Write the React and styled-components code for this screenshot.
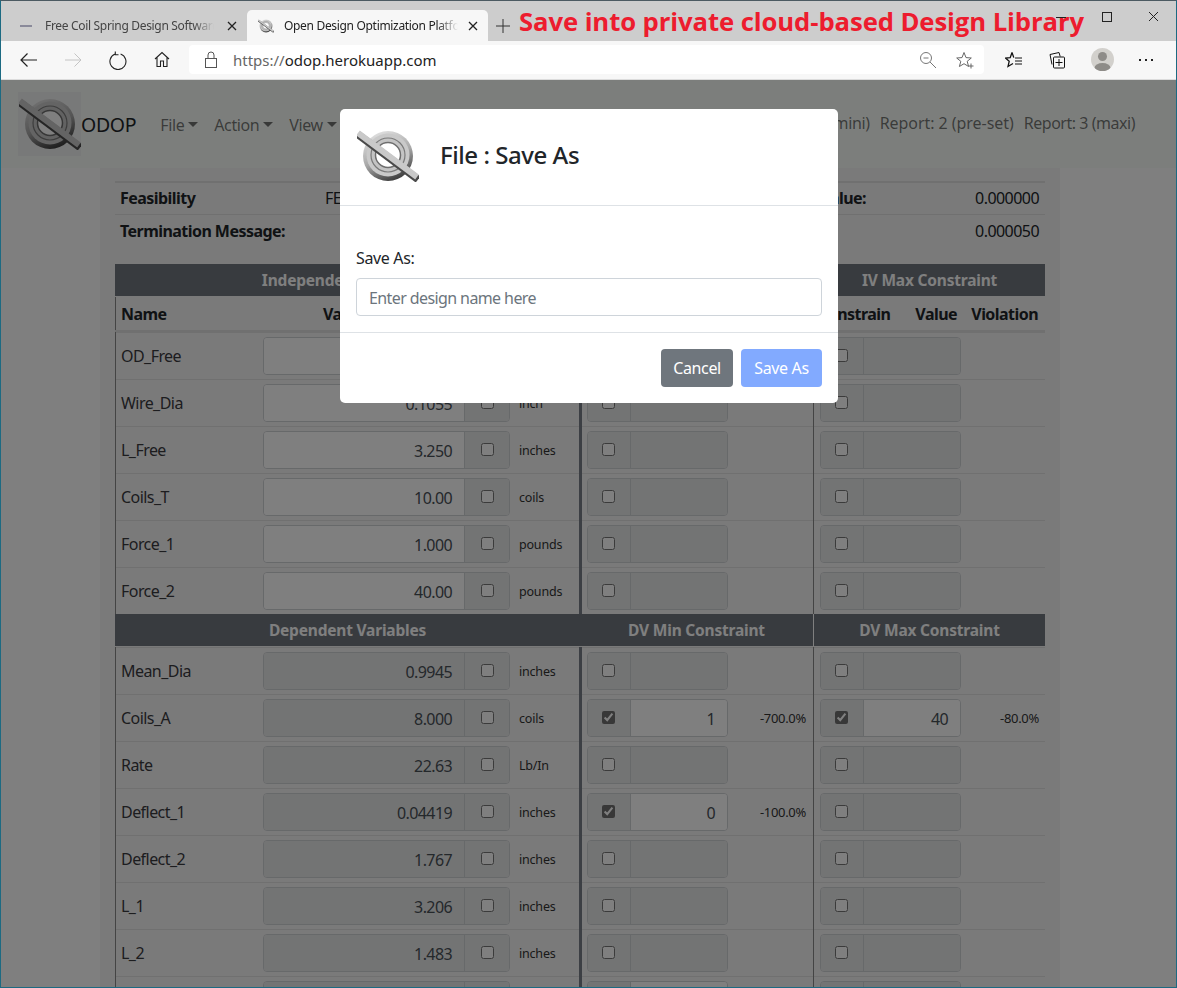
import React from "react";
import styled, { createGlobalStyle } from "styled-components";

const FONT = `"Noto Sans", "Open Sans", sans-serif`;

const Global = createGlobalStyle`
  html, body { margin: 0; padding: 0; height: 988px; overflow: hidden; background: #cdcdcd; }
  * { box-sizing: border-box; }
  body { font-family: ${FONT}; font-size: 16px; color: #212529; letter-spacing: -0.35px; }
`;

const Frame = styled.div`
  width: 1177px; height: 988px; display: flex; flex-direction: column; overflow: hidden;
  border: 1px solid #1c6a82; border-top-color: #4c5a62; position: relative;
`;
const TabStrip = styled.div`
  height: 40px; flex: none; background: #cdcdcd; display: flex; align-items: flex-end; padding-left: 7px;
`;
const Tab = styled.div`
  width: ${p => p.$active ? 241 : 239}px; height: 31px; flex: none; display: flex; align-items: center; padding: 0 10px 0 ${p => p.$active ? 11 : 12}px; gap: ${p => p.$active ? 10 : 13}px;
  background: ${p => p.$active ? "#f7f7f7" : "transparent"}; border-radius: 5px 5px 0 0;
  color: ${p => p.$active ? "#222" : "#444"}; font-size: 12px; font-family: ${FONT};
`;
const TabLabel = styled.span`
  flex: 1; overflow: hidden; white-space: nowrap; letter-spacing: -0.32px;
  mask-image: linear-gradient(to right, #000 88%, transparent 100%);
`;
const FavDash = styled.span`
  width: 12px; height: 2px; background: #8a8a9a; flex: none;
`;
const NewTab = styled.span`
  margin: 0 9px 0 8px; display: flex; align-items: center; height: 31px; flex: none;
`;
const Banner = styled.h1`
  margin: 0; font-family: "Open Sans", sans-serif; font-size: 25.7px; font-weight: 700; color: #ed1c2e; white-space: nowrap; letter-spacing: -0.1px; line-height: 34px; align-self: flex-end; height: 36px;
`;
const WindowControls = styled.div`
  position: absolute; top: 10px; right: 17px; display: flex; gap: 36px; align-items: center;
`;
const Toolbar = styled.div`
  height: 39px; flex: none; background: #f7f7f7; border-bottom: 1px solid #dcdcdc; display: flex; align-items: center; padding: 0 0 1px 18px;
`;
const NavButtons = styled.div`
  display: flex; align-items: center; gap: 25px; margin-right: 19px;
  svg:nth-child(2) { margin-left: -1px; }
  svg:nth-child(4) { margin-left: 1px; }
`;
const Address = styled.div`
  width: 795px; height: 29px; flex: none; background: #fff; border-radius: 4px; display: flex; align-items: center; padding: 0 10px 0 15px;
  font-size: 15px; letter-spacing: 0;
`;
const Url = styled.span`
  flex: 1; margin-left: 15px; color: #222; span { color: #666; }
`;
const AddressIcons = styled.div`
  display: flex; align-items: center; gap: 19px;
`;
const ToolIcons = styled.div`
  display: flex; align-items: center; margin-left: 21px; gap: 24px;
`;
const Avatar = styled.span`
  width: 23px; height: 23px; border-radius: 50%; overflow: hidden; display: block; background: #d2d0cc; flex: none;
`;
const Dots = styled.span`
  display: flex; gap: 4px; margin-left: 1px;
  i { display: block; width: 2px; height: 2px; background: #222; }
`;

const Viewport = styled.div`
  flex: 1; position: relative; overflow: hidden; background: #fff; min-height: 0;
`;
const Navbar = styled.nav`
  height: 88px; background: #f8fcf8; display: flex; align-items: center; padding: 0 41px 0 17px;
`;
const Brand = styled.div`
  display: flex; align-items: center; font-size: 19.5px; margin-right: 24px; letter-spacing: -0.3px;
`;
const BrandLogo = styled.div`
  width: 63px; height: 64px; background: #f1f2f2; display: flex; align-items: center; justify-content: center;
`;
const Menu = styled.div`
  display: flex; align-items: center; gap: 16px; margin-top: 1px; flex: 1;
`;
const MenuItem = styled.span`
  color: rgba(0,0,0,.55); display: inline-flex; align-items: center; gap: 4px; letter-spacing: -0.4px;
  &::after { content: ""; border-top: 5px solid; border-left: 5px solid transparent; border-right: 5px solid transparent; margin-top: -1px; }
`;
const Reports = styled.div`
  display: flex; gap: 10px; margin-top: -3px;
`;
const ReportLink = styled.span`
  color: rgba(0,0,0,.55); white-space: nowrap; letter-spacing: ${p => p.$ls}px;
`;
const Container = styled.main`
  width: 960px; margin-left: 99px; background: #f5f5f5; padding: 13px 15px 0;
`;
const Status = styled.div`
  display: grid; grid-template-columns: 205px 421px 1fr auto; align-items: center; height: 33px; border-top: 1px solid #e0e0e0; padding: 0 6px 0 5px; letter-spacing: -0.55px;
  &:first-child { border-top-width: 2px; padding-bottom: 2px; }
`;
const StatusLabel = styled.b`
  font-weight: 700; white-space: nowrap;
`;
const SectionHead = styled.div`
  height: 32px; background: #70767f; display: grid; grid-template-columns: 465px 233px 232px; color: #fff; font-size: 15.5px; font-weight: 700; margin: ${p => p.$first ? "17px 0 0" : "0 0 1px"}; letter-spacing: -0.2px;
`;
const SectionCell = styled.div`
  display: flex; align-items: center; justify-content: center; border-left: ${p => p.$line ? "1px solid #fff" : "0"};
`;
const SubHead = styled.div`
  height: 35px; margin-top: 1px; border-bottom: 2px solid #e0e0e0; display: grid; grid-template-columns: 148px 316px 234px 232px; align-items: center; font-weight: 700; letter-spacing: -0.55px;
`;
const NameHead = styled.div`
  height: 100%; border-left: 1px solid #888; padding-left: 5px; display: flex; align-items: center;
`;
const ValueHead = styled.div`
  display: flex; gap: 16px; padding-left: 60px;
`;
const ConstraintHead = styled.div`
  display: grid; grid-template-columns: 78px 61px 81px; align-items: center; padding-left: 5px;
  span:nth-child(n+2) { text-align: right; }
`;
const Row = styled.div`
  height: 47px; border-top: 1px solid #e0e0e0; display: grid; grid-template-columns: 148px 316px 234px 232px;
`;
const NameCell = styled.div`
  border-left: 1px solid #888; margin-top: -1px; padding-left: 5px; display: flex; align-items: center; color: #3a3a3f; letter-spacing: -0.55px;
`;
const ValueCell = styled.div`
  display: flex; align-items: center;
`;
const ConstraintCell = styled.div`
  margin-top: -1px; padding: 1px ${p => p.$thick ? 7 : 6}px 0 ${p => p.$thick ? 5 : 6}px; display: flex; align-items: center;
  border-left: ${p => p.$thick ? "3px solid #787e88" : "1px solid #888"};
`;
const Group = styled.div`
  width: ${p => p.$w}px; height: 38px; flex: none; display: flex; border: 1px solid #cfd2d5; border-radius: 4px; overflow: hidden;
`;
const GroupInput = styled.div`
  flex: 1; background: ${p => p.$on ? "#fff" : "#e7e8e8"}; color: #495057; text-align: right; padding: 0 12px; line-height: 38px; letter-spacing: -0.6px;
`;
const CheckBox = styled.label`
  width: ${p => p.$w}px; flex: none; background: #e7e8e8; display: flex; align-items: center; justify-content: center;
  border-${p => p.$side}: 1px solid #cfd2d5; padding: 0 ${p => p.$side === "right" ? 2 : 0}px 2px 0;
  input { margin: 0; width: 13px; height: 13px; accent-color: #707070; }
`;
const Unit = styled.span`
  margin-left: 9px; font-size: 12.5px; color: #333; letter-spacing: -0.2px;
`;
const Violation = styled.span`
  margin-left: auto; font-size: 13px; color: #333; letter-spacing: -0.3px;
`;

const Backdrop = styled.div`
  position: absolute; inset: 0; background: rgba(0,0,0,.5); display: flex; justify-content: center; align-items: flex-start; padding: 29px 0 0 1px;
`;
const Modal = styled.div`
  width: 498px; background: #fff; border-radius: 5px; color: #212529;
`;
const ModalHeader = styled.header`
  display: flex; align-items: center; padding: 21px 16px 23px 17px; border-bottom: 1px solid #dee2e6;
`;
const ModalTitle = styled.h2`
  margin: 0 0 4px 21px; font-size: 24px; font-weight: 500; line-height: 29px; letter-spacing: -0.45px;
`;
const ModalBody = styled.div`
  padding: 40px 16px 16px;
`;
const FieldLabel = styled.label`
  display: block; line-height: 24px; margin-bottom: 8px;
`;
const TextInput = styled.input`
  display: block; width: 100%; height: 38px; border: 1px solid #ced4da; border-radius: 4px; padding: 2px 12px 0; font: inherit; letter-spacing: -0.6px; color: #495057; outline: none;
  &::placeholder { color: #6c757d; opacity: 1; }
`;
const ModalFooter = styled.footer`
  display: flex; justify-content: flex-end; gap: 8px; padding: 16px; border-top: 1px solid #dee2e6;
`;
const Button = styled.button`
  height: 38px; width: ${p => p.$w}px; border: 0; border-radius: 4px; background: ${p => p.$bg}; color: #fff; font: inherit; letter-spacing: inherit; padding: 0;
`;

const Icon = ({ w = 20, h = 20, children, stroke = "#222", sw = 1 }) => (
  <svg width={w} height={h} viewBox={`0 0 ${w} ${h}`} fill="none" stroke={stroke} strokeWidth={sw} style={{ display: "block", flex: "none" }}>{children}</svg>
);
const CloseX = ({ s = 10, stroke = "#222", sw = 1.3 }) => (
  <Icon w={s} h={s} stroke={stroke} sw={sw}><path d={`M1 1L${s - 1} ${s - 1}M${s - 1} 1L1 ${s - 1}`} /></Icon>
);

const Logo = ({ w = 62, h = 52 }) => (
  <svg width={w} height={h} viewBox="0 0 62 52" style={{ display: "block", flex: "none" }}>
    <defs>
      <linearGradient id="ringShade" x1="0.2" y1="0" x2="0.6" y2="1">
        <stop offset="0" stopColor="#e4e4e4" />
        <stop offset="0.55" stopColor="#a8a8a8" />
        <stop offset="1" stopColor="#3c3c3c" />
      </linearGradient>
    </defs>
    <circle cx="31" cy="26" r="25" fill="url(#ringShade)" />
    <circle cx="31" cy="25" r="21.5" fill="#c9c9c9" />
    <circle cx="31" cy="25" r="17" fill="#c4c4c4" stroke="#7a7a7a" strokeWidth="1.2" />
    <circle cx="31" cy="25" r="12.5" fill="#fff" stroke="#6e6e6e" strokeWidth="1.5" />
    <path d="M1 4.5L61 49.5" stroke="#4a4a4a" strokeWidth="7.5" />
    <path d="M1 3L60 47" stroke="#c9c9c9" strokeWidth="6" />
  </svg>
);

const ivRows = [
  { name: "OD_Free", value: "1.100", unit: "inches" },
  { name: "Wire_Dia", value: "0.1055", unit: "inch" },
  { name: "L_Free", value: "3.250", unit: "inches" },
  { name: "Coils_T", value: "10.00", unit: "coils" },
  { name: "Force_1", value: "1.000", unit: "pounds" },
  { name: "Force_2", value: "40.00", unit: "pounds" },
];
const dvRows = [
  { name: "Mean_Dia", value: "0.9945", unit: "inches" },
  { name: "Coils_A", value: "8.000", unit: "coils", min: { v: "1", pct: "-700.0%" }, max: { v: "40", pct: "-80.0%" } },
  { name: "Rate", value: "22.63", unit: "Lb/In" },
  { name: "Deflect_1", value: "0.04419", unit: "inches", min: { v: "0", pct: "-100.0%" } },
  { name: "Deflect_2", value: "1.767", unit: "inches" },
  { name: "L_1", value: "3.206", unit: "inches" },
  { name: "L_2", value: "1.483", unit: "inches" },
  { name: "L_Solid", value: "1.055", unit: "inches", min: { v: "0", pct: "" } },
];

const Check = ({ on, w, side }) => (
  <CheckBox $w={w} $side={side}>
    <input type="checkbox" checked={!!on} readOnly />
  </CheckBox>
);

const Constraint = ({ data, thick }) => (
  <ConstraintCell $thick={thick}>
    <Group $w={141}>
      <Check on={data && data.pct} w={43} side="right" />
      <GroupInput $on={!!data}>{data ? data.v : ""}</GroupInput>
    </Group>
    {data && data.pct ? <Violation>{data.pct}</Violation> : null}
  </ConstraintCell>
);

const VarRow = ({ row, editable }) => (
  <Row>
    <NameCell>{row.name}</NameCell>
    <ValueCell>
      <Group $w={247}>
        <GroupInput $on={editable}>{row.value}</GroupInput>
        <Check w={45} side="left" />
      </Group>
      <Unit>{row.unit}</Unit>
    </ValueCell>
    <Constraint data={row.min} thick />
    <Constraint data={row.max} />
  </Row>
);

export default function App() {
  return (
    <Frame>
      <Global />
      <TabStrip>
        <Tab>
          <FavDash />
          <TabLabel>Free Coil Spring Design Software</TabLabel>
          <CloseX />
        </Tab>
        <Tab $active>
          <Logo w={16} h={14} />
          <TabLabel>Open Design Optimization Platform</TabLabel>
          <CloseX />
        </Tab>
        <NewTab>
          <Icon w={14} h={14} stroke="#333"><path d="M7 0V14M0 7H14" /></Icon>
        </NewTab>
        <Banner>Save into private cloud-based Design Library</Banner>
      </TabStrip>
      <WindowControls>
        <Icon w={10} h={10} stroke="#222"><path d="M0 5.5H10" /></Icon>
        <Icon w={10} h={10} stroke="#222"><rect x=".5" y=".5" width="9" height="9" /></Icon>
        <CloseX s={11} sw={1} />
      </WindowControls>
      <Toolbar>
        <NavButtons>
          <Icon w={20} h={16} sw={1.2}><path d="M18 8H2M8.5 1.5L2 8l6.5 6.5" /></Icon>
          <Icon w={20} h={16} stroke="#c4c4c4"><path d="M2 8H18M11.5 1.5L18 8l-6.5 6.5" /></Icon>
          <Icon w={20} h={20} sw={1.1}><path d="M7 3.6A8 8 0 1 0 12.6 3.5M7.3 1V4.2H10.5" transform="translate(0 .5)" /></Icon>
          <Icon w={16} h={17} sw={1.1}><path d="M1 8L8 1.5 15 8M3 6.5V15.5H6.5V10H9.5V15.5H13V6.5" /></Icon>
        </NavButtons>
        <Address>
          <Icon w={14} h={17} stroke="#555"><rect x="1.5" y="7.5" width="11" height="9" /><path d="M4 7.5V4a3 3 0 0 1 6 0V7.5" /></Icon>
          <Url><span>https://</span>odop.herokuapp.com</Url>
          <AddressIcons>
            <Icon w={18} h={18} stroke="#777"><circle cx="7" cy="7" r="5.5" /><path d="M4.5 7H9.5M11 11L17 17" /></Icon>
            <Icon w={18} h={18} stroke="#666"><path d="M8 1.5L10 6.6L15.3 7L11.2 10.3L12.6 15.5L8 12.7L3.4 15.5L4.8 10.3L.7 7L6 6.6Z" /><path d="M15 12.5V17.5M12.5 15H17.5" /></Icon>
          </AddressIcons>
        </Address>
        <ToolIcons>
          <Icon w={18} h={18} stroke="#111"><path d="M7 1.5L8.8 6.6M7 1.5L5.2 6.6L.5 7L4.2 10.3L3 15.5L8 12.5" strokeWidth="1.3" /><path d="M10 7H17M10 10H17M10 13H17" /></Icon>
          <Icon w={20} h={20} stroke="#111"><path d="M5 14.5L3 4.5L12 2.5L13.2 6.5" /><rect x="6.5" y="7" width="11" height="11" rx="1" fill="#f7f7f7" /><path d="M12 9V16M8.5 12.5H15.5" /></Icon>
          <Avatar>
            <svg width="23" height="23" viewBox="0 0 23 23"><circle cx="11.5" cy="8.5" r="4.5" fill="#8e8c88" /><ellipse cx="11.5" cy="20" rx="8" ry="5" fill="#8e8c88" /></svg>
          </Avatar>
          <Dots><i /><i /><i /></Dots>
        </ToolIcons>
      </Toolbar>
      <Viewport>
        <Navbar>
          <Brand>
            <BrandLogo><Logo /></BrandLogo>
            ODOP
          </Brand>
          <Menu>
            <MenuItem>File</MenuItem>
            <MenuItem>Action</MenuItem>
            <MenuItem>View</MenuItem>
          </Menu>
          <Reports>
            <ReportLink $ls={-0.35}>Report: 1 (mini)</ReportLink>
            <ReportLink $ls={-0.05}>Report: 2 (pre-set)</ReportLink>
            <ReportLink $ls={-0.47}>Report: 3 (maxi)</ReportLink>
          </Reports>
        </Navbar>
        <Container>
          <Status>
            <StatusLabel>Feasibility</StatusLabel>
            <span>FEASIBLE</span>
            <StatusLabel>Objective Value:</StatusLabel>
            <span>0.000000</span>
          </Status>
          <Status>
            <StatusLabel>Termination Message:</StatusLabel>
            <span />
            <StatusLabel>OBJMIN:</StatusLabel>
            <span>0.000050</span>
          </Status>
          <SectionHead $first>
            <SectionCell>Independent Variables</SectionCell>
            <SectionCell>IV Min Constraint</SectionCell>
            <SectionCell $line>IV Max Constraint</SectionCell>
          </SectionHead>
          <SubHead>
            <NameHead>Name</NameHead>
            <ValueHead><span>Value</span><span>Fix</span></ValueHead>
            <ConstraintHead><span>Constrain</span><span>Value</span><span>Violation</span></ConstraintHead>
            <ConstraintHead><span>Constrain</span><span>Value</span><span>Violation</span></ConstraintHead>
          </SubHead>
          {ivRows.map(r => <VarRow key={r.name} row={r} editable />)}
          <SectionHead>
            <SectionCell>Dependent Variables</SectionCell>
            <SectionCell>DV Min Constraint</SectionCell>
            <SectionCell $line>DV Max Constraint</SectionCell>
          </SectionHead>
          {dvRows.map(r => <VarRow key={r.name} row={r} />)}
        </Container>
        <Backdrop>
          <Modal>
            <ModalHeader>
              <Logo />
              <ModalTitle>File : Save As</ModalTitle>
            </ModalHeader>
            <ModalBody>
              <FieldLabel htmlFor="save-as">Save As:</FieldLabel>
              <TextInput id="save-as" placeholder="Enter design name here" />
            </ModalBody>
            <ModalFooter>
              <Button $w={72} $bg="#6f767d">Cancel</Button>
              <Button $w={81} $bg="#82aaff">Save As</Button>
            </ModalFooter>
          </Modal>
        </Backdrop>
      </Viewport>
    </Frame>
  );
}
